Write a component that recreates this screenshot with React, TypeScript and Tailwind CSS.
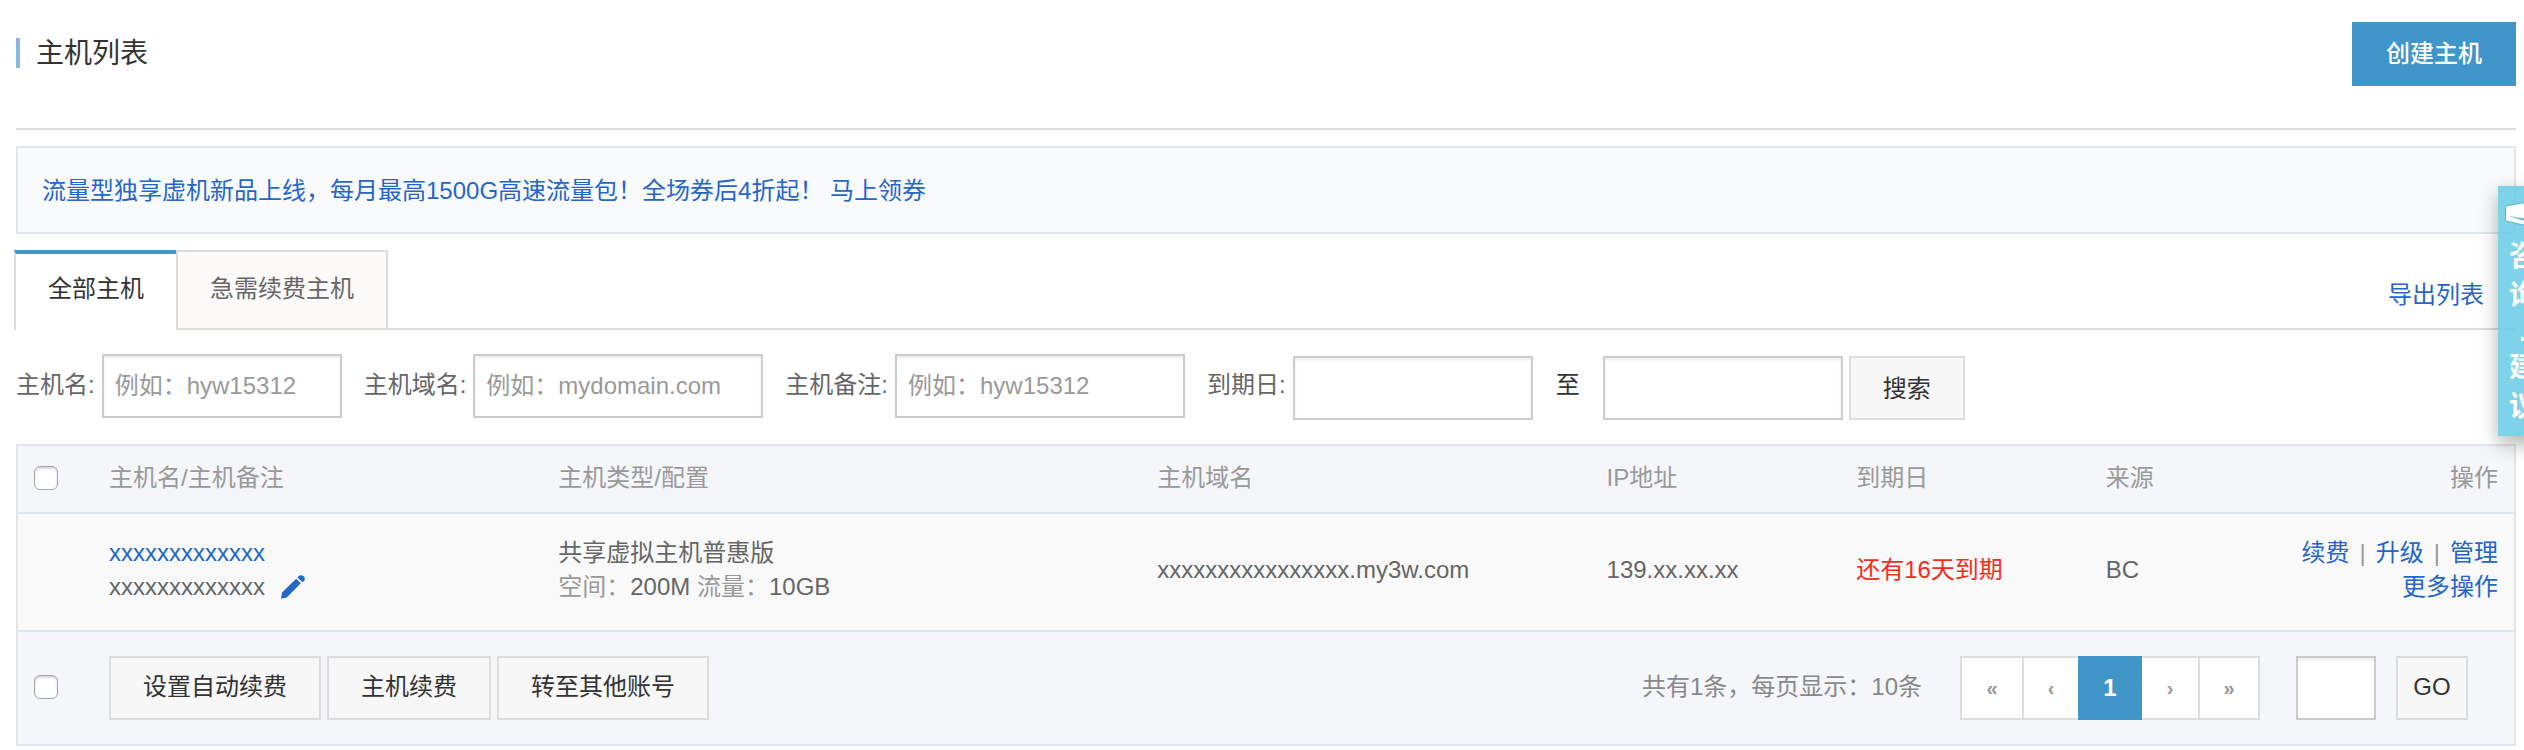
import { useState } from "react";

type Host = {
  id: string;
  name: string;
  remark: string;
  type: string;
  space: string;
  traffic: string;
  domain: string;
  ip: string;
  expires: string;
  source: string;
};

const HOSTS: Host[] = [
  {
    id: "1",
    name: "xxxxxxxxxxxxx",
    remark: "xxxxxxxxxxxxx",
    type: "共享虚拟主机普惠版",
    space: "200M",
    traffic: "10GB",
    domain: "xxxxxxxxxxxxxxxx.my3w.com",
    ip: "139.xx.xx.xx",
    expires: "还有16天到期",
    source: "BC",
  },
];

const inputClass =
  "h-16 border-2 border-[#ccc] bg-white px-[11px] text-[#333] placeholder:text-[#999] shadow-[inset_0_2px_3px_rgba(0,0,0,0.08)] outline-none";
const buttonClass = "h-16 border-2 border-[#ddd] bg-[#f7f7f7] pb-[2px] text-[#333] whitespace-nowrap";
const checkboxClass =
  "block size-6 appearance-none rounded-[6px] border border-[#a5a5a5] bg-white shadow-[inset_0_2px_2px_rgba(0,0,0,0.15)] checked:bg-[#4096c8]";
const thClass = "h-[68px] border-b-2 border-[#e1e6eb] px-4 pb-[2px] text-left font-normal";
const tdClass = "h-[118px] border-b-2 border-[#e1e6eb] px-4 pb-1";

export default function App() {
  const [tab, setTab] = useState("all");

  return (
    <div className="relative overflow-hidden bg-white pb-1 font-['Liberation_Sans','Noto_Sans_CJK_SC',sans-serif] text-[24px] leading-[34px] text-[#666]">
      <main className="pr-2 pl-4">
        <header className="flex items-start justify-between border-b-2 border-[#ddd] pt-[22px] pb-[42px]">
          <h1 className="mt-4 border-l-4 border-[#88b7e0] pt-[2px] pl-4 text-[28px] leading-[28px] text-[#333]">
            主机列表
          </h1>
          <button className="h-16 bg-[#4096c8] px-[34px] font-medium text-white">创建主机</button>
        </header>

        <div className="mt-4 flex h-[88px] items-center border-2 border-[#e1e6eb] bg-[#f9fafc] px-6 pt-[2px]">
          <a href="#promo" className="text-[#2566c8]">
            流量型独享虚机新品上线，每月最高1500G高速流量包！全场券后4折起！ 马上领券
          </a>
        </div>

        <nav className="mt-4 flex h-20 items-stretch">
          <Tab label="全部主机" active={tab === "all"} onClick={() => setTab("all")} />
          <Tab label="急需续费主机" active={tab === "renew"} onClick={() => setTab("renew")} />
          <div className="flex flex-1 items-center justify-end border-b-2 border-[#ddd] pt-3 pr-8">
            <a href="#export" className="text-[#2566c8]">导出列表</a>
          </div>
        </nav>

        <form className="mt-6 flex items-start whitespace-nowrap leading-[62px]" onSubmit={(e) => e.preventDefault()}>
          <label htmlFor="host-name" className="mr-[7px]">主机名:</label>
          <input id="host-name" className={`${inputClass} mr-[22px] w-60`} placeholder="例如：hyw15312" />
          <label htmlFor="host-domain" className="mr-[7px]">主机域名:</label>
          <input id="host-domain" className={`${inputClass} mr-[22px] w-[290px]`} placeholder="例如：mydomain.com" />
          <label htmlFor="host-remark" className="mr-[7px]">主机备注:</label>
          <input id="host-remark" className={`${inputClass} mr-[22px] w-[290px]`} placeholder="例如：hyw15312" />
          <label htmlFor="date-from" className="mr-[7px]">到期日:</label>
          <div className="flex pt-[2px]">
            <input id="date-from" className={`${inputClass} w-60`} />
            <label htmlFor="date-to" className="px-[23px] leading-[58px] text-[#333]">至</label>
            <input id="date-to" className={`${inputClass} w-60`} />
            <button className={`${buttonClass} ml-[6px] px-8`}>搜索</button>
          </div>
        </form>

        <div className="mt-6 border-2 border-[#e1e6eb]">
          <table className="w-full table-fixed border-separate border-spacing-0">
            <colgroup>
              <col className="w-[75px]" />
              <col className="w-[18%]" />
              <col className="w-[24%]" />
              <col className="w-[18%]" />
              <col className="w-[10%]" />
              <col className="w-[10%]" />
              <col className="w-[6%]" />
              <col />
            </colgroup>
            <thead className="bg-[#f4f6fa] text-[#999]">
              <tr>
                <th className={thClass}>
                  <input type="checkbox" aria-label="全选" className={checkboxClass} />
                </th>
                <th className={thClass}>主机名/主机备注</th>
                <th className={thClass}>主机类型/配置</th>
                <th className={thClass}>主机域名</th>
                <th className={thClass}>IP地址</th>
                <th className={thClass}>到期日</th>
                <th className={thClass}>来源</th>
                <th className={`${thClass} text-right`}>操作</th>
              </tr>
            </thead>
            <tbody className="bg-[#f9f9f9]">
              {HOSTS.map((h) => (
                <tr key={h.id}>
                  <td className={tdClass} />
                  <td className={tdClass}>
                    <a href="#host" className="block text-[#2566c8]">{h.name}</a>
                    <div className="flex items-center gap-4">
                      {h.remark}
                      <button aria-label="编辑备注">
                        <PencilIcon />
                      </button>
                    </div>
                  </td>
                  <td className={tdClass}>
                    <div>{h.type}</div>
                    <div>
                      <span className="text-[#999]">空间：</span>
                      {h.space} <span className="text-[#999]">流量：</span>
                      {h.traffic}
                    </div>
                  </td>
                  <td className={tdClass}>{h.domain}</td>
                  <td className={tdClass}>{h.ip}</td>
                  <td className={`${tdClass} text-[#f32c1e]`}>{h.expires}</td>
                  <td className={tdClass}>{h.source}</td>
                  <td className={`${tdClass} text-right text-[#999]`}>
                    <a href="#renew" className="text-[#2566c8]">续费</a>
                    <span className="px-[10px]">|</span>
                    <a href="#upgrade" className="text-[#2566c8]">升级</a>
                    <span className="px-[10px]">|</span>
                    <a href="#manage" className="text-[#2566c8]">管理</a>
                    <br />
                    <a href="#more" className="text-[#2566c8]">更多操作</a>
                  </td>
                </tr>
              ))}
            </tbody>
            <tfoot className="bg-[#f4f6fa]">
              <tr>
                <td className="h-28 px-4 pb-[2px]">
                  <input type="checkbox" aria-label="全选本页" className={checkboxClass} />
                </td>
                <td className="h-28 px-4" colSpan={7}>
                  <div className="flex items-center justify-between pr-[30px]">
                    <div className="flex gap-[6px]">
                      <button className={`${buttonClass} px-8`}>设置自动续费</button>
                      <button className={`${buttonClass} px-8`}>主机续费</button>
                      <button className={`${buttonClass} px-8`}>转至其他账号</button>
                    </div>
                    <Pager />
                  </div>
                </td>
              </tr>
            </tfoot>
          </table>
        </div>
      </main>

      <aside className="absolute top-[186px] -right-6 h-[250px] w-[50px] bg-[#68cbe5]/85 pt-4 text-center text-[28px] font-bold text-white shadow-[0_8px_20px_rgba(0,0,0,0.3)]">
        <CapIcon />
        <a href="#feedback" className="block leading-[39px]">
          <span className="block">咨</span>
          <span className="block">询</span>
          <span className="block leading-[33px]">.</span>
          <span className="block">建</span>
          <span className="block">议</span>
        </a>
      </aside>
    </div>
  );
}

function Tab({ label, active, onClick }: { label: string; active: boolean; onClick: () => void }) {
  return (
    <button
      onClick={onClick}
      className={
        active
          ? "-ml-[2px] border-t-4 border-l-2 border-t-[#4096c8] border-l-[#ddd] px-8 pb-[6px] text-[#333]"
          : "border-2 border-[#ddd] bg-[#fbfaf8] px-8 pb-[2px] text-[#666]"
      }
    >
      {label}
    </button>
  );
}

function Pager() {
  return (
    <div className="flex items-center">
      <span className="mr-[38px] pb-[2px] text-[#888]">共有1条，每页显示：10条</span>
      <div className="flex h-16 text-[20px] font-bold text-[#999]">
        <button className="w-16 border-2 border-[#ddd] bg-white">«</button>
        <button className="w-[54px] border-y-2 border-[#ddd] bg-white">‹</button>
        <button className="w-16 bg-[#4096c8] text-[24px] text-white">1</button>
        <button className="w-14 border-y-2 border-[#ddd] bg-white">›</button>
        <button className="w-[62px] border-2 border-[#ddd] bg-white">»</button>
      </div>
      <input aria-label="页码" className={`${inputClass} mr-5 ml-9 w-20`} />
      <button className={`${buttonClass} w-[72px]`}>GO</button>
    </div>
  );
}

function PencilIcon() {
  return (
    <svg className="block size-6" viewBox="0 0 24 24" fill="#2566c8">
      <path d="M0 23.800 1 17.500 15.200 3.800 19.800 8.200 5.800 22.500Z" />
      <path d="M16.500 2.500C18 0 21 -.3 22.700 1.300 24.500 3 24.200 5.800 21.500 7.300Z" />
    </svg>
  );
}

function CapIcon() {
  return (
    <svg className="mx-auto block h-[35px] w-9" viewBox="0 0 36 35" fill="#fff" stroke="#4cb8d6">
      <path d="M.5 5.500Q.5 4 2 3.800L18 .8 34 3.800Q35.500 4 35.500 5.500V17.500Q35.500 19 34 19.200L18 23 2 19.200Q.5 19 .5 17.500Z" />
      <path d="M2.500 13.500 18 18.500 33.500 13.500 18 16.500Z" fill="#4cb8d6" stroke="none" />
    </svg>
  );
}
